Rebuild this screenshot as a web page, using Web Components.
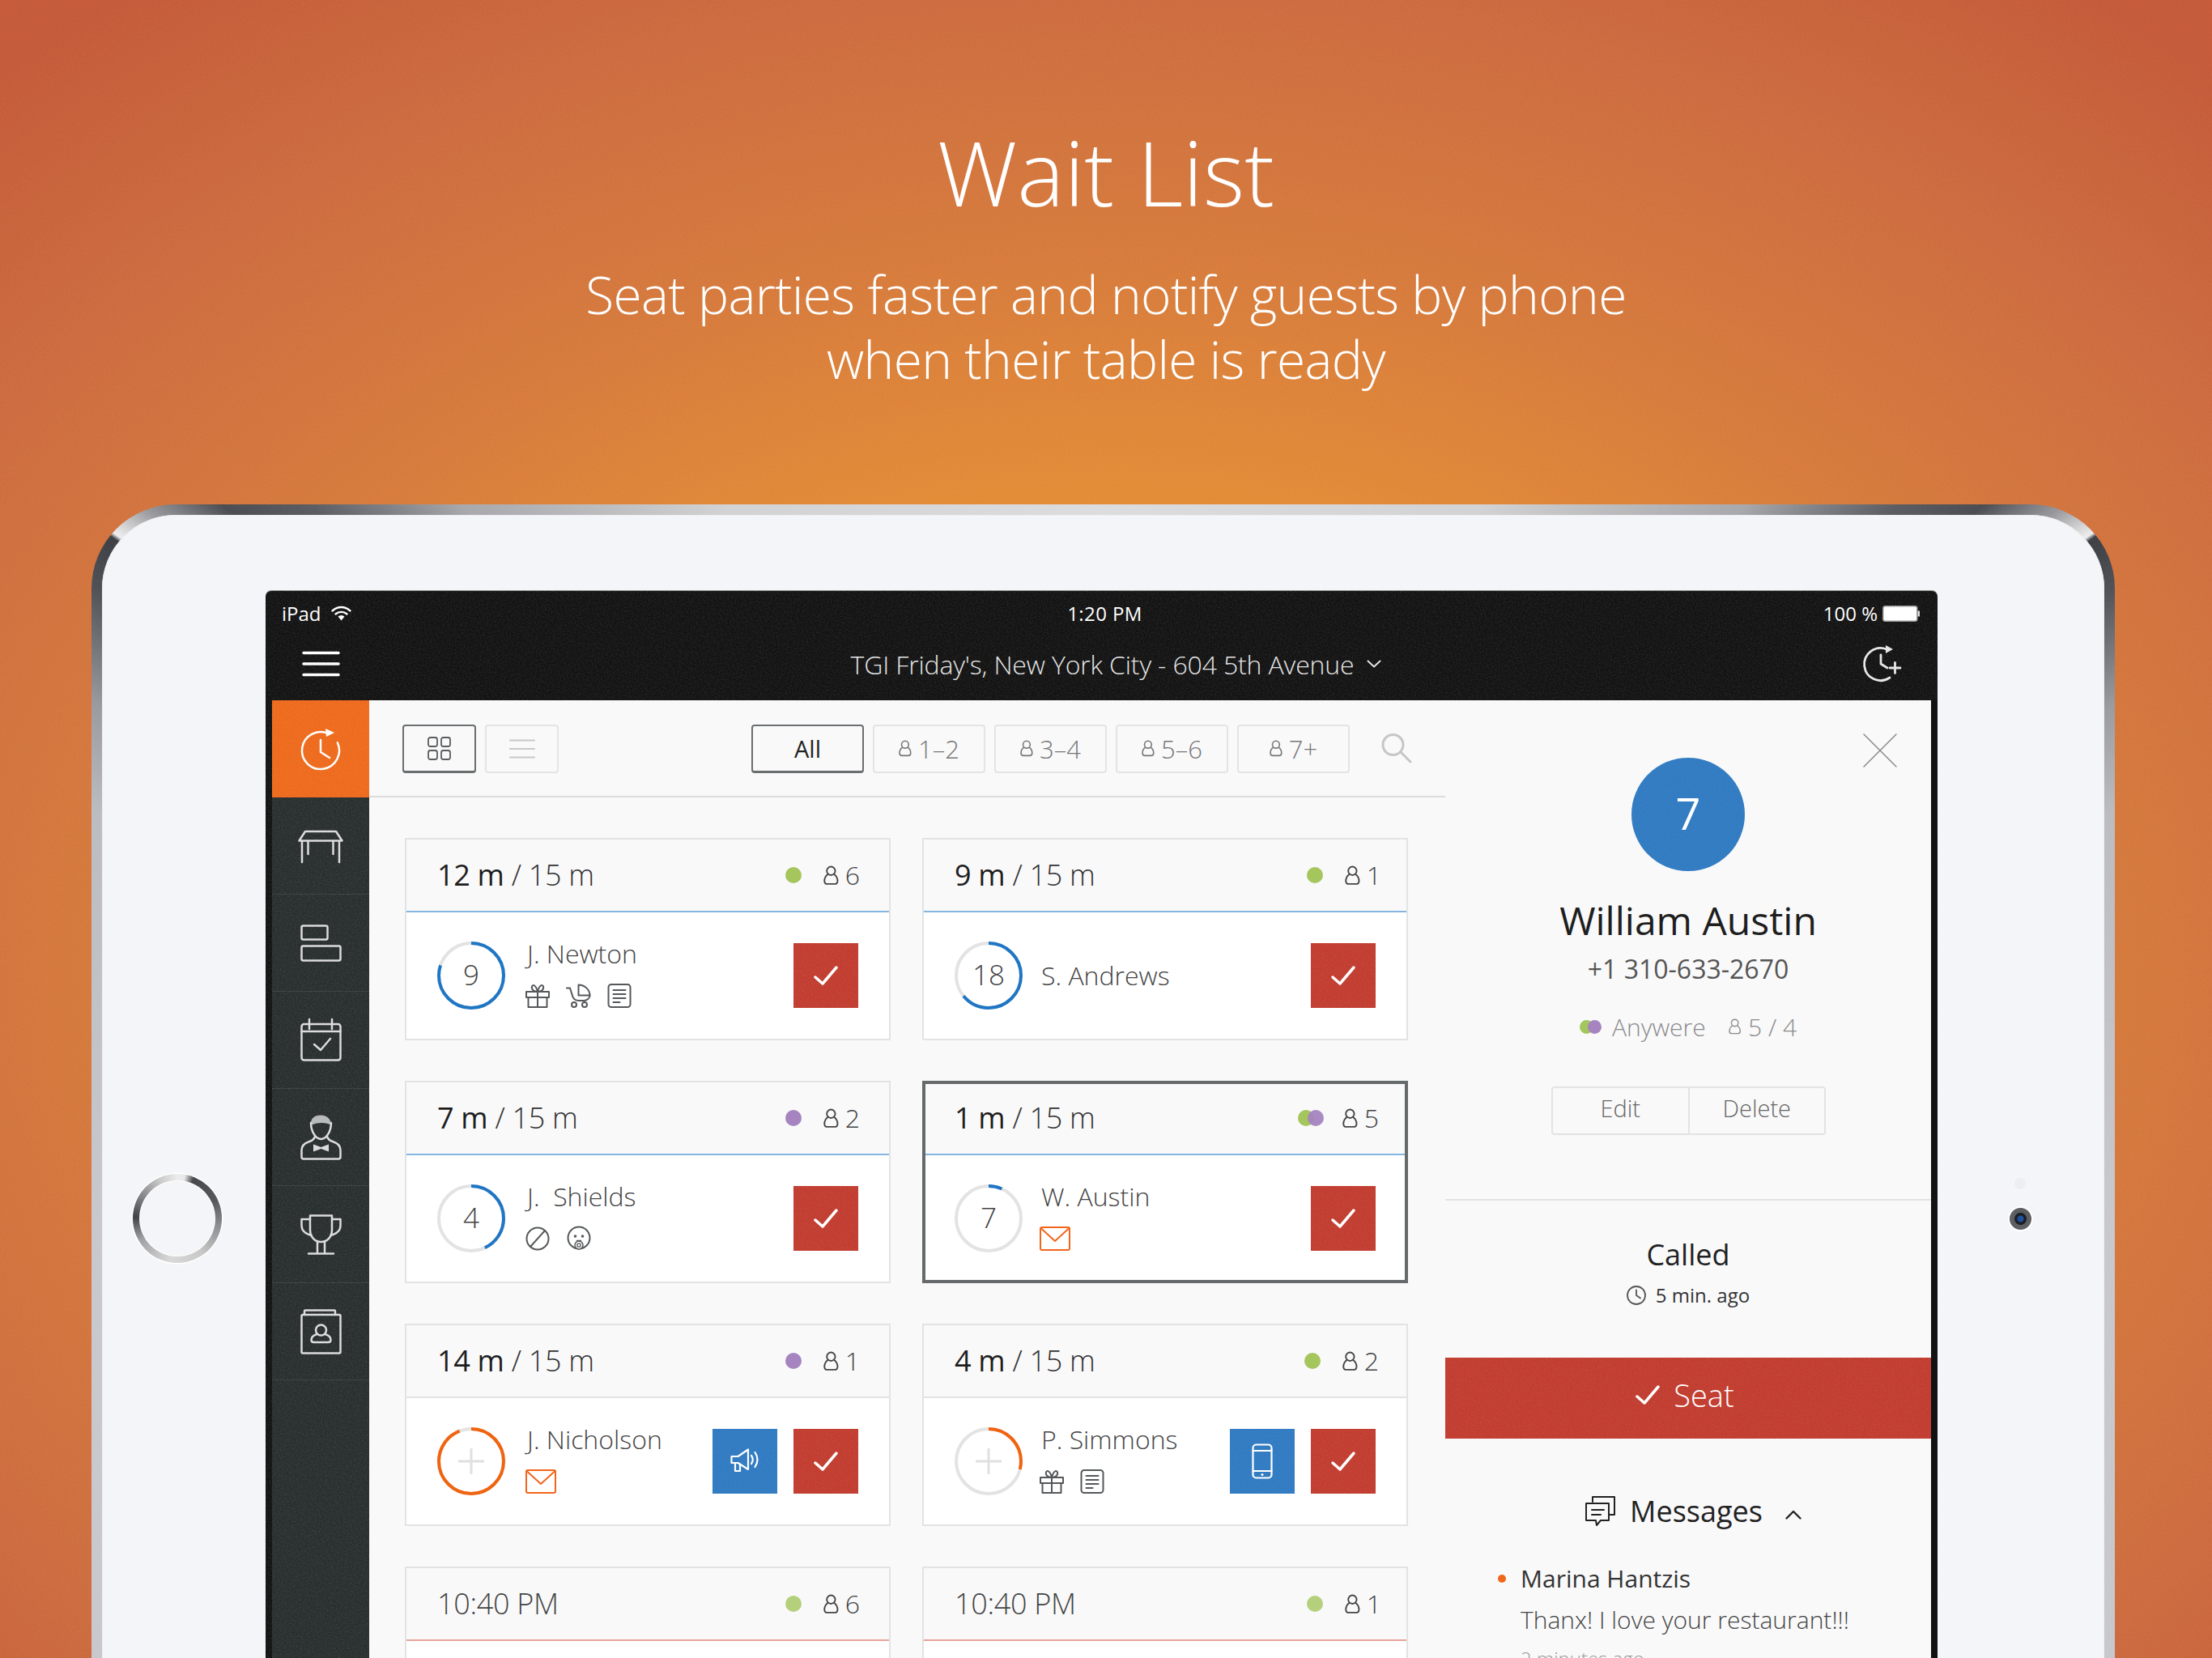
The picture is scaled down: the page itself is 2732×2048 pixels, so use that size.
<!DOCTYPE html>
<html lang="en">
<head>
<meta charset="utf-8">
<title>Wait List</title>
<style>
html,body{margin:0;padding:0;background:#d06a36}
body{font-family:"Open Sans","Liberation Sans",sans-serif}
</style>
</head>
<body>
<promo-page>
  <span slot="title">Wait List</span>
  <span slot="sub">Seat parties faster and notify guests by phone<br>when their table is ready</span>
  <ipad-frame>
    <app-screen>
      <wait-card slot="cards" time="12 m" limit="15 m" dots="g" count="6" ring="0.8" line="#86b6e0" pad="36" gap="27" num="9">
        J. Newton
        <span slot="icons"><ui-icon name="gift"></ui-icon><ui-icon name="stroller"></ui-icon><ui-icon name="doc"></ui-icon></span>
      </wait-card>
      <wait-card slot="cards" time="9 m" limit="15 m" dots="g" count="1" ring="0.64" line="#86b6e0" pad="31" gap="23" num="18">S. Andrews</wait-card>
      <wait-card slot="cards" time="7 m" limit="15 m" dots="p" count="2" ring="0.43" line="#86b6e0" pad="36" gap="27" num="4">
        J.&nbsp; Shields
        <span slot="icons"><ui-icon name="blocked"></ui-icon><ui-icon name="baby"></ui-icon></span>
      </wait-card>
      <wait-card slot="cards" time="1 m" limit="15 m" dots="gp" count="5" ring="0.067" line="#86b6e0" pad="34" gap="23" num="7" selected>
        W. Austin
        <span slot="icons"><ui-icon name="mail"></ui-icon></span>
      </wait-card>
      <wait-card slot="cards" time="14 m" limit="15 m" dots="p" count="1" ring="0.94" line="#e2e3e3" pad="36" gap="27" ringcolor="#f0630f" action="mega">
        J. Nicholson
        <span slot="icons"><ui-icon name="mail"></ui-icon></span>
      </wait-card>
      <wait-card slot="cards" time="4 m" limit="15 m" dots="g" count="2" ring="0.29" line="#e2e3e3" pad="34" gap="23" ringcolor="#f0630f" action="phone">
        P. Simmons
        <span slot="icons"><ui-icon name="gift"></ui-icon><ui-icon name="doc"></ui-icon></span>
      </wait-card>
      <wait-card slot="cards" clock="10:40 PM" dots="g" count="6" line="#e8a29b" pad="36" faded></wait-card>
      <wait-card slot="cards" clock="10:40 PM" dots="g" count="1" line="#e8a29b" pad="31" faded></wait-card>
      <guest-detail slot="detail"></guest-detail>
    </app-screen>
  </ipad-frame>
</promo-page>

<script>
const ICONS = {
  person:[18,24,`<circle cx="9" cy="6.5" r="5"/><path d="M5.2 10.5C2.6 12.5 1.2 15 1.2 18.4c0 2.3 1.4 3.6 3.6 3.6h8.4c2.2 0 3.6-1.3 3.6-3.6 0-3.4-1.4-5.9-4-7.9"/>`],
  gift:[30,30,`<rect x="1" y="10" width="28" height="7"/><path d="M3.5 17v12h23V17M15 10v19"/><path d="M15 10C10 10 7 7 8 3.6 9 .6 13 1.600 15 10c2-8.400 6-9.400 7-6.400C23 7 20 10 15 10z"/>`],
  stroller:[31,30,`<path d="M15.500 1.500C23 1.500 29.500 7.500 29.500 14.500h-14z"/><path d="M1 5.500h4l3 9.500c1 4 4 6 8 6h6c4 0 7.500-3 7.500-6.500"/><circle cx="10" cy="26" r="3"/><circle cx="23" cy="26" r="3"/>`],
  doc:[30,30,`<rect x="1.500" y="1" width="27" height="28" rx="3.500"/><path d="M7.500 8h15M7.500 13h15M7.500 18h15M7.500 23h8"/>`],
  blocked:[30,30,`<circle cx="15" cy="15" r="13.500"/><path d="M6 25 24 5"/>`],
  baby:[32,32,`<circle cx="16" cy="15" r="13.500"/><circle cx="11.500" cy="13" r=".8" fill="currentColor"/><circle cx="20.500" cy="13" r=".8" fill="currentColor"/><circle cx="16" cy="24" r="5" fill="#fff" stroke-width="1.500"/><circle cx="16" cy="24" r="2.200" stroke-width="1.300"/><path d="M13.500 18.500h5" stroke-width="1.500"/>`],
  mail:[38,30,`<rect x="1" y="1" width="36" height="28" rx="2"/><path d="M1.500 2 19 18 36.500 2"/>`],
  check:[30,24,`<path d="M2 14l9 8L28 2"/>`],
  mega:[36,32,`<path d="M1.500 10h8L22 1.500V26L9.500 18h-8z"/><path d="M6 18v10h6v-8"/><path d="M26 9q3.500 5 0 10M30.500 5q6 9 0 18"/>`],
  phone:[26,44,`<rect x="1.500" y="1.500" width="23" height="41" rx="4"/><path d="M1.500 9h23M1.500 34h23"/><circle cx="13" cy="38.500" r="1.500" fill="currentColor" stroke="none"/>`],
  clockarrow:[50,52,`<path d="M34.700 7.200A23 23 0 1 0 45.800 18.300"/><path d="M25 15v15l11 7"/><path d="M31 1l11 5-10 5z" fill="currentColor" stroke="none"/>`],
  clockplus:[48,46,`<path d="M29 5A20 20 0 1 0 33 40"/><path d="M22 12v11l8 5"/><path d="M28 0l9 5-9 5z" fill="currentColor" stroke="none"/><path d="M33 28h13M39.500 21.500v13"/>`],
  table:[56,40,`<path d="M9 2h38l7.500 11.500H1.500z"/><path d="M5 14v26M12.500 14v16M43.500 14v16M51 14v26"/>`],
  rects:[51,46,`<rect x="1.500" y="1.500" width="32" height="17" rx="2"/><rect x="1.500" y="26.500" width="48" height="18" rx="2"/>`],
  calendar:[51,52,`<rect x="1.500" y="6" width="48" height="44.500" rx="3"/><path d="M1.500 15h48M11 0v12M39 0v12"/><path d="M17 31l8 7 12-14"/>`],
  waiter:[51,56,`<path d="M13 13C12 4 18 .5 25 .5s13 4 13 12.500C33 9 20 9 13 13z" fill="currentColor" stroke="none" opacity=".8"/><path d="M13 10c0 9 5 20 12.500 20S38 19 38 10"/><path d="M18 27c-1 3-3 5-8 6.500C4 35.500 1.500 39 1.500 44v8c0 1.500 1 2.500 2.500 2.500h43c1.500 0 2.500-1 2.500-2.500v-8c0-5-2.500-8.500-8.500-10.500-5-1.500-7-3.500-8-6.500"/><path d="M16 36.500l9.500 3.500 9.500-3.500v9l-9.500-3.500-9.500 3.500z" fill="currentColor" stroke="none"/>`],
  trophy:[51,50,`<path d="M12 1.500h27V19c0 9-6 15-13.500 15S12 28 12 19z"/><path d="M12 6H1.500v8c0 6 5 10 12 12M39 6h10.500v8c0 6-5 10-12 12"/><path d="M21 34v13M30 34v13M10 48.500h31"/>`],
  book:[51,56,`<rect x="1.500" y="7" width="48" height="47.500" rx="1.500"/><path d="M5 7V2.500c0-.6.4-1 1-1h36c.6 0 1 .4 1 1V7"/><circle cx="25.500" cy="26" r="6.500"/><path d="M20.500 31c-5 1.500-7 4-7 7 0 2 1 3 3 3h18c2 0 3-1 3-3 0-3-2-5.500-7-7"/>`],
  grid:[29,29,`<rect x="1" y="1" width="11" height="11" rx="2.500"/><rect x="17" y="1" width="11" height="11" rx="2.500"/><rect x="1" y="17" width="11" height="11" rx="2.500"/><rect x="17" y="17" width="11" height="11" rx="2.500"/>`],
  lines:[30,24,`<path d="M0 1.500h30M0 12h30M0 22.500h30"/>`],
  search:[38,36,`<circle cx="14.500" cy="14" r="12.500"/><path d="M24 23l12 12"/>`],
  menu:[43,30,`<path d="M0 1.500h43M0 15h43M0 28.500h43"/>`],
  x:[40,40,`<path d="M0 0l40 40M40 0L0 40"/>`],
  clock:[24,24,`<circle cx="12" cy="12" r="11"/><path d="M12 5.500V12l5 3.500"/>`],
  bubbles:[38,38,`<path d="M10 8V2h27v22h-7"/><path d="M2 10h28v21H20l-5 6-1-6H2z"/><path d="M9 18h15M9 24h11"/>`],
  up:[20,12,`<path d="M1.500 10.500 10 2l8.500 8.500"/>`],
  down:[18,10,`<path d="M1.500 1.500 9 8.500l7.500-7"/>`],
  wifi:[25,19,`<path d="M1.500 6.500c6.500-6 15.500-6 22 0M5.500 10.500c4-3.500 10-3.500 14 0"/><path d="M8.500 13.500 12.500 18.500 16.500 13.500c-2.500-2-5.500-2-8 0z" fill="currentColor" stroke="none"/>`]
};

class UiIcon extends HTMLElement{
  connectedCallback(){
    if(this.shadowRoot) return;
    const [w,h,body]=ICONS[this.getAttribute('name')];
    const sw=this.getAttribute('stroke')||'2';
    const size=this.getAttribute('scale')||1;
    const root=this.attachShadow({mode:'open'});
    root.innerHTML=`<style>:host{display:inline-flex;flex:none;line-height:0}svg{display:block;overflow:visible}</style>
    <svg width="${w*size}" height="${h*size}" viewBox="0 0 ${w} ${h}" fill="none" stroke="currentColor" stroke-width="${sw}" stroke-linecap="round" stroke-linejoin="round">${body}</svg>`;
  }
}
customElements.define('ui-icon',UiIcon);

class FilmGrain extends HTMLElement{
  connectedCallback(){
    if(this.shadowRoot) return;
    const id='g'+Math.random().toString(36).slice(2);
    const root=this.attachShadow({mode:'open'});
    const op=this.getAttribute('opacity')||'.12';
    root.innerHTML=`<style>:host{position:absolute;inset:0;pointer-events:none;display:block;overflow:hidden}svg{width:100%;height:100%;display:block}</style>
    <svg><filter id="${id}"><feTurbulence type="fractalNoise" baseFrequency="0.55" numOctaves="2" seed="4"/><feColorMatrix values="0 0 0 0 1  0 0 0 0 1  0 0 0 0 1  1.6 0 0 0 -0.55"/></filter><rect width="100%" height="100%" filter="url(#${id})" opacity="${op}"/></svg>`;
  }
}
customElements.define('film-grain',FilmGrain);

class PromoPage extends HTMLElement{
  constructor(){
    super();
    this.attachShadow({mode:'open'}).innerHTML=`<style>
      :host{display:block;width:2732px;height:2048px;overflow:hidden;position:relative;color:#fff;
        font-family:"Open Sans","Liberation Sans",sans-serif;
        background:radial-gradient(ellipse 2050px 1500px at 50% 1200px,#e88f34 0%,#e38b36 40%,#d67a3c 60%,#cd6c3f 80%,#c45a38 100%)}
      header{display:block;text-align:center;padding-top:142px}
      h1{margin:0;font-weight:360;font-size:110px;line-height:140px}
      p{margin:42px 0 0;font-weight:300;font-size:64px;line-height:80px;letter-spacing:-.63px}
      .dev{margin:139px 0 0 113px}
    </style>
    <film-grain opacity=".05"></film-grain>
    <header><h1><slot name="title"></slot></h1><p><slot name="sub"></slot></p></header>
    <div class="dev"><slot></slot></div>`;
  }
}
customElements.define('promo-page',PromoPage);

class IpadFrame extends HTMLElement{
  constructor(){
    super();
    this.attachShadow({mode:'open'}).innerHTML=`<style>
      :host{display:block;width:2499px;height:1764px;box-sizing:border-box;padding:13px;border-radius:104px;
        background:conic-gradient(from 0deg at 50% 50%,#dcdcde 0deg,#d2d2d4 28deg,#a8a8ac 42deg,#5a5c62 48deg,#4a4c52 51deg,#9a9a9e 53.500deg,#eeeeee 55.300deg,#3c3e44 55.500deg,#4e5056 58deg,#9a9a9e 63deg,#bcbcc0 68deg,#c8c8cc 90deg,
          #c8c8cc 270deg,#bcbcc0 292deg,#9a9a9e 297deg,#4e5056 302deg,#3c3e44 304.500deg,#eeeeee 304.700deg,#9a9a9e 306.500deg,#4a4c52 309deg,#5a5c62 312deg,#a8a8ac 318deg,#d2d2d4 332deg,#dcdcde 360deg)}
      .bezel{height:100%;border-radius:91px;background:#f4f5f8;display:grid;grid-template-columns:202px 2065px 206px;box-shadow:0 0 0 1px #eee inset}
      .l,.r{display:flex;align-items:center;justify-content:center}
      .home{width:110px;height:110px;border-radius:50%;box-sizing:border-box;padding:9px;
        background:conic-gradient(#ececec 0deg,#e8e8e8 10deg,#45454b 22deg,#55555b 65deg,#8c8c90 100deg,#c8c8c8 145deg,#d8d8d8 190deg,#a0a0a4 240deg,#3f3f45 272deg,#808084 300deg,#c8c8c8 335deg,#ececec 360deg);
        box-shadow:0 0 0 1.500px #fff;margin-left:-16px}
      .home i{display:block;width:100%;height:100%;border-radius:50%;background:#f4f5f8;box-shadow:0 0 0 1px #fff}
      .r{flex-direction:column;gap:23px;padding-bottom:37px;padding-right:2px}
      .sensor{width:14px;height:14px;border-radius:50%;background:#eceef0}
      .cam{width:27px;height:27px;border-radius:50%;background:radial-gradient(circle,#1a4fa0 0 3.500px,#1a1c24 4.500px 7px,#5b5d60 8px);box-shadow:0 0 0 2px #fff}
      .s{padding-top:94px;min-width:0}
    </style>
    <div class="bezel">
      <div class="l"><div class="home"><i></i></div></div>
      <div class="s"><slot></slot></div>
      <div class="r"><div class="sensor"></div><div class="cam"></div></div>
    </div>`;
  }
}
customElements.define('ipad-frame',IpadFrame);

class NavItem extends HTMLElement{
  connectedCallback(){
    if(this.shadowRoot) return;
    const active=this.hasAttribute('active');
    this.attachShadow({mode:'open'}).innerHTML=`<style>
      :host{display:flex;align-items:center;justify-content:center;height:120px;box-sizing:border-box;color:#dcdcdc;
        border-bottom:1px solid rgba(255,255,255,.09);position:relative}
      :host([active]){background:#ee6a1c;color:#fff;border-bottom:0}
      ::slotted(*){position:relative}
    </style><slot></slot>${active?'<film-grain opacity=".08"></film-grain>':''}`;
  }
}
customElements.define('nav-item',NavItem);

class AppScreen extends HTMLElement{
  constructor(){
    super();
    const chip=(t)=>`<filter-chip><ui-icon name="person" scale=".88" stroke="1.800"></ui-icon>${t}</filter-chip>`;
    this.attachShadow({mode:'open'}).innerHTML=`<style>
      :host{display:block;background:#121212;border-radius:7px 7px 0 0;height:1600px;position:relative;color:#fff;box-shadow:0 -1px 0 #9a9a9a}
      .top{position:relative;height:135px}
      .status{display:grid;grid-template-columns:1fr auto 1fr;align-items:center;height:55px;padding:0 22px 0 20px;font-size:24px;box-sizing:border-box}
      .status>div{display:flex;align-items:center}
      .status .rt{justify-content:flex-end;gap:6px}
      .status .time{font-weight:400;padding-left:10px;letter-spacing:.4px}
      .nav{height:80px;display:flex;align-items:center;justify-content:space-between;padding:0 44px 10px 47px;box-sizing:border-box}
      .venue{display:flex;align-items:center;gap:16px;font-size:32px;font-weight:300;letter-spacing:-.15px;color:#e4e4e4;margin-left:38px}
      .wrap{display:grid;grid-template-columns:128px 1329px 600px;padding-right:8px}
      .side{background:linear-gradient(90deg,#121212 0 8px,#282d2e 8px);position:relative;height:1465px;padding-left:8px;box-sizing:border-box}
      .side-in{position:relative}
      main{background:#f9f9fa;color:#222;height:1465px}
      .tools{height:120px;border-bottom:2px solid #dcdcdc;box-sizing:border-box;display:flex;align-items:flex-start;padding:30px 0 0 41px}
      .views{display:flex;gap:11px;margin-right:238px}
      .chips{display:flex;gap:11px;align-items:center}
      .srch{color:#c6c6c6;margin:11px 0 0 39px}
      .cards{display:grid;grid-template-columns:600px 600px;column-gap:39px;row-gap:50px;padding:50px 0 0 44px}
    </style>
    <div class="top">
      <film-grain opacity=".1"></film-grain>
      <div class="status"><div>iPad&nbsp;&nbsp;<ui-icon name="wifi" stroke="2.400"></ui-icon></div><div class="time">1:20 PM</div>
        <div class="rt">100 %<svg width="46" height="20" viewBox="0 0 46 20"><rect x=".8" y=".8" width="42" height="18.400" rx="2.500" fill="#fff" stroke="#999" stroke-width="1.500"/><rect x="43.500" y="6.500" width="2.500" height="7" fill="#ddd"/></svg></div></div>
      <div class="nav"><ui-icon name="menu" stroke="3.500"></ui-icon>
        <div class="venue">TGI Friday's, New York City - 604 5th Avenue <ui-icon name="down" stroke="2"></ui-icon></div>
        <ui-icon name="clockplus" stroke="2.800" style="color:#e6e6e6"></ui-icon></div>
    </div>
    <div class="wrap">
      <div class="side"><film-grain opacity=".1"></film-grain><div class="side-in">
        <nav-item active><ui-icon name="clockarrow" stroke="2.500"></ui-icon></nav-item>
        <nav-item><ui-icon name="table" stroke="2.500"></ui-icon></nav-item>
        <nav-item><ui-icon name="rects" stroke="2.500"></ui-icon></nav-item>
        <nav-item><ui-icon name="calendar" stroke="2.500"></ui-icon></nav-item>
        <nav-item><ui-icon name="waiter" stroke="2.500"></ui-icon></nav-item>
        <nav-item><ui-icon name="trophy" stroke="2.500"></ui-icon></nav-item>
        <nav-item><ui-icon name="book" stroke="2.500"></ui-icon></nav-item>
      </div></div>
      <main>
        <div class="tools">
          <div class="views">
            <view-chip on><ui-icon name="grid" stroke="1.800"></ui-icon></view-chip>
            <view-chip><ui-icon name="lines" stroke="2"></ui-icon></view-chip>
          </div>
          <div class="chips">
            <filter-chip on>All</filter-chip>${chip('1–2')}${chip('3–4')}${chip('5–6')}${chip('7+')}
          </div>
          <div class="srch"><ui-icon name="search" stroke="3"></ui-icon></div>
        </div>
        <div class="cards"><slot name="cards"></slot></div>
      </main>
      <slot name="detail"></slot>
    </div>`;
  }
}
customElements.define('app-screen',AppScreen);

class ViewChip extends HTMLElement{
  constructor(){super();this.attachShadow({mode:'open'}).innerHTML=`<style>
    :host{display:flex;align-items:center;justify-content:center;width:91px;height:60px;box-sizing:border-box;border:2px solid #e4e4e4;border-radius:4px;color:#c8c8c8;background:#f9f9fa}
    :host([on]){border-color:#6a6e6e;border-bottom-width:3px;color:#5a5e60}
  </style><slot></slot>`;}
}
customElements.define('view-chip',ViewChip);

class FilterChip extends HTMLElement{
  constructor(){super();this.attachShadow({mode:'open'}).innerHTML=`<style>
    :host{display:flex;align-items:center;justify-content:center;gap:8px;width:139px;height:60px;box-sizing:border-box;border:2px solid #e4e4e4;border-radius:4px;color:#777;background:#f9f9fa;font-size:31px;font-weight:300}
    :host([on]){border-color:#6a6e6e;border-bottom-width:3px;color:#222;font-weight:400;font-size:29px}
  </style><slot></slot>`;}
}
customElements.define('filter-chip',FilterChip);

class WaitCard extends HTMLElement{
  connectedCallback(){
    if(this.shadowRoot) return;
    const a=n=>this.getAttribute(n);
    const dl=[...(a('dots')||'')];
    const dots=dl.map(d=>`<i class="dot ${d}"></i>`).join('');
    const ring=parseFloat(a('ring')||'0');
    const C=2*Math.PI*40;
    const rc=a('ringcolor')||'#1f76c4';
    const num=a('num');
    const faded=this.hasAttribute('faded');
    const title=a('clock')?`<span class="clock">${a('clock')}</span>`:`<b>${a('time')}</b><span class="sep"> / </span><span class="lim">${a('limit')}</span>`;
    const action=a('action');
    const hasIcons=!!this.querySelector('[slot=icons]');
    this.attachShadow({mode:'open'}).innerHTML=`<style>
      :host{display:block;width:600px;height:250px;box-sizing:border-box;border:2px solid #e2e3e3;background:#fff;color:#333;position:relative}
      :host([selected]){border-color:#666a6a;outline:2px solid #666a6a;outline-offset:-4px}
      .h{height:88px;background:#f9f9fa;border-bottom:2px solid ${a('line')};display:flex;align-items:center;padding:0 ${a('pad')}px 0 38px;box-sizing:content-box;margin-bottom:-2px}
      .t{flex:1;font-size:36px;font-weight:300;color:#333;letter-spacing:-.3px;padding-bottom:2px}
      .t b{font-weight:400;color:#1e1e1e}
      .t .clock{color:#444}
      .dots{display:flex;margin-right:${dl.length>1?23:27}px}
      .dot{width:20px;height:20px;border-radius:50%;display:block}
      .dot.g{background:#a4c65c}.dot.p{background:#a584c0}
      .dot+.dot{margin-left:-8px;opacity:.95}
      :host([faded]) .dot.g{background:#b5d07c}
      .c{display:flex;align-items:center;gap:8px;font-size:32px;font-weight:300;color:#444;line-height:1}
      .b{height:160px;display:flex;align-items:center;padding:0 38px;gap:${a('gap')||24}px;box-sizing:border-box}
      .ring{width:84px;height:84px;position:relative;flex:none;display:flex;align-items:center;justify-content:center;font-size:35px;font-weight:300;color:#444;padding-bottom:3px;box-sizing:border-box}
      .ring svg{position:absolute;inset:0}
      .info{flex:1;min-width:0;display:flex;flex-direction:column;margin-top:${hasIcons?-4:0}px}
      .name{font-size:32px;font-weight:300;line-height:34px;color:#444;white-space:nowrap}
      .icons{margin-top:20px;margin-left:-2px;color:#55585a}
      .icons:not(.has){display:none}
      ::slotted([slot=icons]){display:flex;gap:20px;height:30px;align-items:center}
      .act{display:flex;gap:20px}
      .btn{width:80px;height:80px;display:flex;align-items:center;justify-content:center;background:#c13c2f;color:#fff;position:relative}
      .btn.blue{background:#317bc2}
    </style>
    <div class="h"><div class="t">${title}</div><div class="dots">${dots}</div><div class="c"><ui-icon name="person" stroke="1.800" scale="1.04"></ui-icon>${a('count')}</div></div>
    ${faded?'':`<div class="b">
      <div class="ring"><svg width="84" height="84" viewBox="0 0 84 84" fill="none" stroke-width="4"><circle cx="42" cy="42" r="40" stroke="#e3e3e3"/><circle cx="42" cy="42" r="40" stroke="${rc}" stroke-dasharray="${C*ring} ${C}" transform="rotate(-90 42 42)"/>${num?'':'<path d="M42 26v32M26 42h32" stroke="#e0e0e0" stroke-width="3"/>'}</svg>${num||''}</div>
      <div class="info"><div class="name"><slot></slot></div><div class="icons ${hasIcons?'has':''}"><slot name="icons"></slot></div></div>
      <div class="act">${action?`<div class="btn blue"><ui-icon name="${action}" stroke="2.200"></ui-icon><film-grain opacity=".06"></film-grain></div>`:''}<div class="btn"><ui-icon name="check" stroke="3.500"></ui-icon><film-grain opacity=".08"></film-grain></div></div>
    </div>`}`;
    const m=this.querySelector('[slot=icons] ui-icon[name=mail]');
    if(m) m.style.color='#f2661b';
  }
}
customElements.define('wait-card',WaitCard);

class GuestDetail extends HTMLElement{
  constructor(){
    super();
    this.attachShadow({mode:'open'}).innerHTML=`<style>
      :host{display:block;background:#f9f9fa;height:1465px;position:relative;color:#222;text-align:center;overflow:hidden}
      .x{position:absolute;top:42px;right:43px;color:#8a8a8a}
      .av{width:140px;height:140px;border-radius:50%;background:#317bc2;color:#fff;font-size:54px;display:flex;align-items:center;justify-content:center;margin:71px auto 0;font-weight:400;position:relative;overflow:hidden;padding-bottom:4px;box-sizing:border-box}
      .name{font-size:48px;line-height:60px;margin-top:31px;color:#1e1e1e;font-weight:400}
      .ph{font-size:32px;line-height:40px;margin-top:10px;color:#555;font-weight:400}
      .meta{display:flex;justify-content:center;align-items:center;height:40px;margin-top:31px;font-size:30px;font-weight:300;color:#8a8a8a}
      .meta i{width:17px;height:17px;border-radius:50%;background:#a4c65c;display:block}
      .meta i+i{background:#a584c0;margin:0 13px 0 -7px}
      .meta .gap{width:28px}
      .meta span{display:flex;align-items:center;gap:9px}
      .eb{display:grid;grid-template-columns:1fr 1fr;width:339px;height:60px;box-sizing:border-box;margin:54px auto 0;border:2px solid #e2e3e3;border-radius:4px;font-size:29px;font-weight:300;color:#666}
      .eb div{display:flex;align-items:center;justify-content:center;padding-bottom:7px}
      .eb div+div{border-left:2px solid #e2e3e3}
      hr{border:0;border-top:2px solid #e2e3e3;margin:79px 0 0}
      .st{font-size:36px;line-height:48px;margin-top:43px;color:#222;font-weight:400}
      .ago{display:flex;justify-content:center;align-items:center;gap:12px;font-size:24px;line-height:32px;margin-top:10px;color:#333}
      .ago ui-icon{color:#555}
      .seat{height:100px;background:#c13c2f;color:#fff;display:flex;align-items:center;justify-content:center;gap:17px;font-size:38px;font-weight:300;margin-top:61px;position:relative;padding:0 8px 8px 0;box-sizing:border-box}
      .msg{display:flex;justify-content:center;align-items:center;height:50px;margin-top:64px;font-size:36px;color:#222;padding-left:12px;gap:18px}
      .msg .ch{margin:-5px 0 0 10px}
      .list{text-align:left;padding-left:93px;position:relative}
      .who{font-size:30px;line-height:40px;margin-top:39px;color:#333}
      .who::before{content:"";position:absolute;left:65px;margin-top:15px;width:10px;height:10px;border-radius:50%;background:#f2661b}
      .say{font-size:30px;line-height:44px;margin-top:9px;font-weight:300;color:#444}
      .when{font-size:24px;line-height:36px;margin-top:8px;font-weight:300;color:#999}
    </style>
    <div class="x"><ui-icon name="x" stroke="1.500"></ui-icon></div>
    <div class="av">7<film-grain opacity=".06"></film-grain></div>
    <div class="name">William Austin</div>
    <div class="ph">+1 310-633-2670</div>
    <div class="meta"><i></i><i></i>Anywere<span class="gap"></span><span><ui-icon name="person" stroke="1.600" scale=".85"></ui-icon>5 / 4</span></div>
    <div class="eb"><div>Edit</div><div>Delete</div></div>
    <hr>
    <div class="st">Called</div>
    <div class="ago"><ui-icon name="clock" stroke="1.800"></ui-icon>5 min. ago</div>
    <div class="seat"><ui-icon name="check" stroke="3.500"></ui-icon>Seat<film-grain opacity=".08"></film-grain></div>
    <div class="msg"><ui-icon name="bubbles" stroke="2"></ui-icon>Messages<span class="ch"><ui-icon name="up" stroke="2.400"></ui-icon></span></div>
    <div class="list"><div class="who">Marina Hantzis</div><div class="say">Thanx! I love your restaurant!!!</div><div class="when">2 minutes ago</div></div>`;
  }
}
customElements.define('guest-detail',GuestDetail);
</script>
</body>
</html>
